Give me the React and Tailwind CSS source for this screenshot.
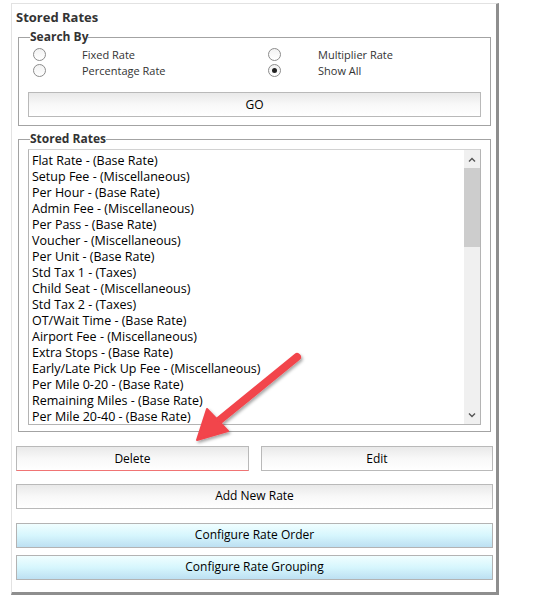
import React, { useState } from 'react'

const rates = [
    'Flat Rate - (Base Rate)',
    'Setup Fee - (Miscellaneous)',
    'Per Hour - (Base Rate)',
    'Admin Fee - (Miscellaneous)',
    'Per Pass - (Base Rate)',
    'Voucher - (Miscellaneous)',
    'Per Unit - (Base Rate)',
    'Std Tax 1 - (Taxes)',
    'Child Seat - (Miscellaneous)',
    'Std Tax 2 - (Taxes)',
    'OT/Wait Time - (Base Rate)',
    'Airport Fee - (Miscellaneous)',
    'Extra Stops - (Base Rate)',
    'Early/Late Pick Up Fee - (Miscellaneous)',
    'Per Mile 0-20 - (Base Rate)',
    'Remaining Miles - (Base Rate)',
    'Per Mile 20-40 - (Base Rate)',
]

const Radio = ({ checked, onClick }) => (
    <button type="button" onClick={onClick} className="w-[13px] h-[13px] rounded-full border border-[#8c8c8c] bg-gradient-to-b from-[#f2f2f2] to-white flex items-center justify-center">
        {checked && <span className="w-[5px] h-[5px] rounded-full bg-[#222]"></span>}
    </button>
)

const grayBtn = 'h-[25px] border border-[#b9b9b9] bg-gradient-to-b from-[#e9e9e9] via-[#f8f8f8] to-white text-[12px] text-black'
const blueBtn = 'h-[25px] w-[477px] border border-[#b3b3b3] bg-gradient-to-b from-[#f0feff] via-[#d6f6fd] to-[#bde0f2] text-[12px] text-black'

const App = () => {
    const [searchBy, setSearchBy] = useState('all')

    return (
        <div className="relative w-[541px] h-[614px] bg-white" style={{ fontFamily: '"Open Sans", "Liberation Sans", Arial, sans-serif' }}>
            <div className="ml-[11px] mt-[3px] w-[488px] h-[592px] border-l border-t border-[#e2e2e2] border-r-[3px] border-b-[3px] border-r-[#8e8e8e] border-b-[#8e8e8e]">
                <div className="pl-[4px] pt-[5px] text-[13px] font-bold text-[#333] leading-[16px]">Stored Rates</div>

                <fieldset className="ml-[6px] mt-[5px] w-[472px] h-[96px] border border-[#a3a3a3] px-[9px]">
                    <legend className="ml-[2px] text-[12px] font-bold text-[#333] leading-[14px]">Search By</legend>
                    <div className="grid grid-cols-[49px_186px_50px_1fr] items-center gap-y-[3px] mt-[4px] pl-[5px] text-[11px] text-[#333] leading-[13px]">
                        <Radio checked={searchBy === 'fixed'} onClick={() => setSearchBy('fixed')} />
                        <span>Fixed Rate</span>
                        <Radio checked={searchBy === 'multiplier'} onClick={() => setSearchBy('multiplier')} />
                        <span>Multiplier Rate</span>
                        <Radio checked={searchBy === 'percentage'} onClick={() => setSearchBy('percentage')} />
                        <span>Percentage Rate</span>
                        <Radio checked={searchBy === 'all'} onClick={() => setSearchBy('all')} />
                        <span>Show All</span>
                    </div>
                    <button type="button" className={`${grayBtn} w-[453px] mt-[15px]`}>GO</button>
                </fieldset>

                <fieldset className="ml-[6px] mt-[6px] w-[472px] h-[300px] border border-[#a3a3a3] px-[9px]">
                    <legend className="ml-[2px] text-[12px] font-bold text-[#333] leading-[14px]">Stored Rates</legend>
                    <div className="mt-[3px] w-[453px] h-[276px] border border-[#b4b4b4] border-t-[#d2d2d2] flex bg-white">
                        <ul className="flex-1 pl-[3px] pt-[3px] overflow-hidden">
                            {rates.map(r => (
                                <li key={r} className="h-[16px] leading-[16px] text-[12.5px] text-black whitespace-nowrap">{r}</li>
                            ))}
                        </ul>
                        <div className="w-[16px] bg-[#f0f0f0] flex flex-col">
                            <div className="h-[18px] flex items-center justify-center">
                                <svg width="8" height="5" viewBox="0 0 8 5"><path d="M1 4.5 L4 1.5 L7 4.5" stroke="#555" strokeWidth="1.4" fill="none" /></svg>
                            </div>
                            <div className="h-[79px] bg-[#cdcdcd]"></div>
                            <div className="flex-1"></div>
                            <div className="h-[18px] flex items-center justify-center">
                                <svg width="8" height="5" viewBox="0 0 8 5"><path d="M1 0.5 L4 3.5 L7 0.5" stroke="#555" strokeWidth="1.4" fill="none" /></svg>
                            </div>
                        </div>
                    </div>
                </fieldset>

                <div className="ml-[4px] mt-[14px] flex gap-[12px]">
                    <button type="button" className={`${grayBtn} w-[233px] border-b-[#f07474]`}>Delete</button>
                    <button type="button" className={`${grayBtn} w-[232px]`}>Edit</button>
                </div>
                <div className="ml-[4px] mt-[11px]">
                    <button type="button" className={`${grayBtn} w-[477px]`}>Add New Rate</button>
                </div>
                <div className="ml-[4px] mt-[14px] flex flex-col gap-[7px]">
                    <button type="button" className={blueBtn}>Configure Rate Order</button>
                    <button type="button" className={blueBtn}>Configure Rate Grouping</button>
                </div>
            </div>

            <svg className="absolute left-0 top-0 pointer-events-none" width="541" height="614" viewBox="0 0 541 614">
                <defs>
                    <filter id="sh" x="-20%" y="-20%" width="140%" height="140%">
                        <feDropShadow dx="1.5" dy="2" stdDeviation="1.5" floodColor="#000" floodOpacity="0.35" />
                    </filter>
                </defs>
                <g filter="url(#sh)">
                    <line x1="297" y1="354" x2="216" y2="420" stroke="#f2444c" strokeWidth="8" strokeLinecap="round" />
                    <polygon points="197,437 207,406 228,428" fill="#f2444c" stroke="#f2444c" strokeWidth="2" strokeLinejoin="round" />
                </g>
            </svg>
        </div>
    )
}

export default App
